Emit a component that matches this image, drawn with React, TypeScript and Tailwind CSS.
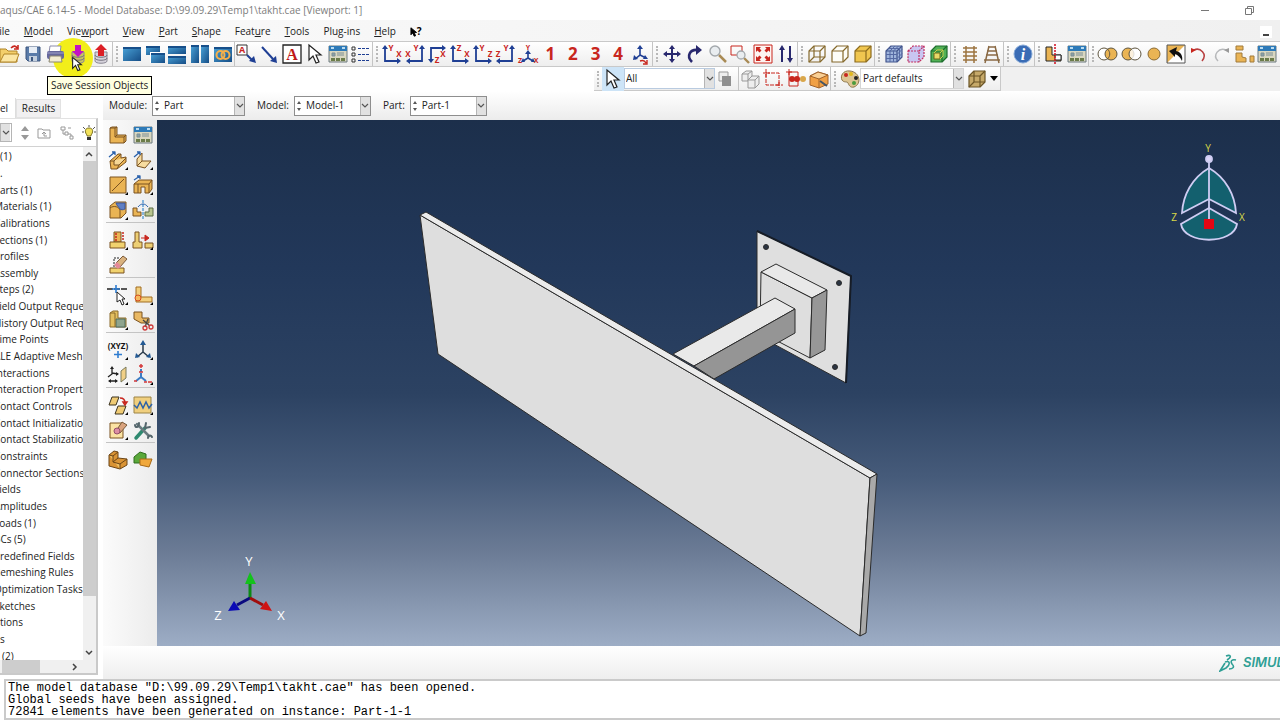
import type { ReactNode } from "react";

const NAVY = "#1f3f94";
const RED = "#c8261e";
const GOLD = "#eab454";
const BROWN = "#7a5220";

function Label({ x, y, children, fill = RED, size = 8 }: { x: number; y: number; children: ReactNode; fill?: string; size?: number }) {
  return (
    <text x={x} y={y} fontSize={size} fontWeight="bold" fill={fill} textAnchor="middle">
      {children}
    </text>
  );
}

function Axes({ corner, up, side }: { corner: "bl" | "br" | "tl"; up: string; side: string }) {
  if (corner === "tl") {
    return (
      <g>
        <path d="M5 17V5H16" fill="none" stroke={NAVY} strokeWidth="1.8" />
        <path d="M5 20l-3-4h6zM20 5l-4-3v6z" fill={NAVY} />
        <Label x={17} y={14}>{side}</Label>
        <Label x={11} y={20}>{up}</Label>
      </g>
    );
  }
  const left = corner === "bl";
  return (
    <g>
      <path d={left ? "M4 6V18H16" : "M18 6V18H6"} fill="none" stroke={NAVY} strokeWidth="1.8" />
      <path d={left ? "M4 2l3 4H1zM20 18l-4-3v6z" : "M18 2l3 4h-6zM2 18l4-3v6z"} fill={NAVY} />
      <Label x={left ? 10 : 12} y={8}>{up}</Label>
      <Label x={left ? 18 : 4} y={14}>{side}</Label>
    </g>
  );
}

function Cube({ fill, stroke, wire = false, dash }: { fill: string; stroke: string; wire?: boolean; dash?: string }) {
  return (
    <g stroke={stroke} strokeWidth="1.2" strokeLinejoin="round" strokeDasharray={dash}>
      <path d="M3 8l5-5h11v11l-5 5H3z" fill={fill} />
      <path d="M3 8h11v11M14 8l5-5" fill="none" />
      {wire && <path d="M8 3v11h11M8 14l-5 5" fill="none" />}
    </g>
  );
}

function Bluebox({ x, y, w, h }: { x: number; y: number; w: number; h: number }) {
  return (
    <g>
      <rect x={x} y={y} width={w} height={h} fill="url(#blue)" />
      <rect x={x} y={y} width={w} height={2} fill="#174f8a" />
    </g>
  );
}

function Disks({ color, arrow, fill }: { color: string; arrow: string; fill: string }) {
  return (
    <g>
      <path d="M5 9v9c0 3 12 3 12 0V9z" fill={fill} stroke="#8b8894" />
      <path d="M5 12c0 3 12 3 12 0M5 15c0 3 12 3 12 0" fill="none" stroke="#77747f" />
      <path d={arrow} fill={color} />
    </g>
  );
}

const cursorPath = "M5 2v15l4-4 3 7 3-1-3-7h5z";

const icons: Record<string, ReactNode> = {
  open: (
    <g stroke="#b08427">
      <path d="M1 19V6h6l2 2h9v11z" fill="#f3cf6b" />
      <path d="M1 19l4-8h15l-3 8z" fill="#fbe6a3" />
      <path d="M12 5c3-3 5-2 6 0M19 2v4h-4" fill="none" stroke={RED} strokeWidth="1.6" />
    </g>
  ),
  save: (
    <g>
      <path d="M4 4h14v14H6l-2-2z" fill="#5a7ba8" stroke="#3c577f" />
      <path d="M7 4h8v6H7z" fill="#e8eef5" />
      <path d="M7 13h8v5H7z" fill="#c3cfdd" />
      <path d="M9 14h2v4H9z" fill="#3c577f" />
    </g>
  ),
  print: (
    <g>
      <path d="M6 3h11l-1 7H5z" fill="#fff" stroke="#8c8cac" />
      <rect x="3" y="8" width="17" height="8" rx="2" fill="#66689c" />
      <path d="M3 10h17" stroke="#9fa1c8" />
      <path d="M6 13h11l1 6H5z" fill="#f2ecd2" stroke="#8a8670" />
    </g>
  ),
  sessionSave: <Disks color="#c313c3" fill="#c9c460" arrow="M8 2h6v6h3l-6 6-6-6h3z" />,
  sessionLoad: <Disks color="#dc1f26" fill="#d6d3dc" arrow="M8 13h6V7h3l-6-6-6 6h3z" />,
  single: <Bluebox x={2} y={4} w={18} h={14} />,
  cascade: (
    <g>
      <Bluebox x={2} y={3} w={14} h={9} />
      <path d="M6 9h15v11H6z" fill="#fff" />
      <Bluebox x={7} y={10} w={14} h={10} />
    </g>
  ),
  tileH: (
    <g>
      <Bluebox x={2} y={3} w={18} h={8} />
      <Bluebox x={2} y={13} w={18} h={8} />
    </g>
  ),
  tileV: (
    <g>
      <Bluebox x={2} y={2} w={8} h={18} />
      <Bluebox x={12} y={2} w={8} h={18} />
    </g>
  ),
  link: (
    <g>
      <Bluebox x={2} y={4} w={18} h={15} />
      <g fill="none" stroke="#f6b04a" strokeWidth="2">
        <circle cx="8.5" cy="12" r="4" />
        <circle cx="13.5" cy="12" r="4" />
      </g>
    </g>
  ),
  textArrow: (
    <g>
      <path d="M2 2h10v10H2z" fill="#fff" stroke="#333" />
      <Label x={7} y={10} size={9}>A</Label>
      <path d="M12 12l5 5" stroke={NAVY} strokeWidth="2" />
      <path d="M21 20l-2-7-5 5z" fill={NAVY} />
    </g>
  ),
  arrow: (
    <g>
      <path d="M4 4l11 12" stroke={NAVY} strokeWidth="2" />
      <path d="M19 20l-1-7-6 5z" fill={NAVY} />
    </g>
  ),
  text: (
    <g>
      <path d="M2 2h18v18H2z" fill="#fff" stroke="#222" strokeWidth="1.3" />
      <text x="11" y="17" fontSize="16" fontWeight="bold" fill="#c01818" textAnchor="middle" fontFamily="Liberation Serif, serif">A</text>
    </g>
  ),
  cursor: <path d={cursorPath} fill="#fff" stroke="#222" strokeWidth="1.2" />,
  manager: (
    <g>
      <path d="M2 3h18v16H2z" fill="#d9d7c0" stroke="#6d7a80" />
      <path d="M2 3h18v5H2z" fill="#2d7ab8" />
      <path d="M4 4h3v2H4zM15 4h3v2h-3z" fill="#b9dcf2" />
      <path d="M5 10h3v3H5zM10 10h7M10 12h7" fill="#8aa0a6" stroke="#7d8f95" />
      <path d="M4 15h4v3H4zM9 15h4v3H9zM14 15h4v3h-4z" fill="#6b7c4a" />
    </g>
  ),
  legend: (
    <g stroke="#333" fill="none">
      <path d="M2 4h3v3H2zM2 10h3v3H2zM2 16h3v3H2z" />
      <path d="M8 5.5h12M8 11.5h12M8 17.5h12" stroke={NAVY} strokeDasharray="3 1" />
    </g>
  ),
  xy: <Axes corner="bl" up="Y" side="X" />,
  yx: <Axes corner="br" up="Y" side="X" />,
  xz: <Axes corner="tl" up="Z" side="X" />,
  zx: <Axes corner="bl" up="Z" side="X" />,
  yz: <Axes corner="bl" up="Y" side="Z" />,
  zy: <Axes corner="br" up="Y" side="Z" />,
  iso: (
    <g>
      <path d="M11 10v5l-5 3M11 15l5 3" fill="none" stroke={NAVY} strokeWidth="1.6" />
      <path d="M11 7l3 4H8zM4 19l2-4 2 4zM18 19l-4 0 2-4z" fill={NAVY} />
      <Label x={11} y={7} size={7}>Y</Label>
      <Label x={3} y={20} size={7}>Z</Label>
      <Label x={19} y={20} size={7}>X</Label>
    </g>
  ),
  triad: (
    <g>
      <path d="M10 5v7l-5 4M10 12l6 3" fill="none" stroke={NAVY} strokeWidth="1.6" />
      <path d="M10 2l3 4H7zM3 17l1-5 4 4zM18 16l-5 0 2-4z" fill={NAVY} />
      <path d="M10 18c3-1 5 0 6 2M17 17v4h-4" fill="none" stroke={RED} strokeWidth="1.4" />
    </g>
  ),
  pan: (
    <g fill="#28286e">
      <path d="M10 5h2v12h-2zM5 10h12v2H5z" />
      <path d="M11 2l3 4H8zM11 20l3-4H8zM2 11l4-3v6zM20 11l-4-3v6z" />
    </g>
  ),
  rotate: (
    <g>
      <path d="M8 19C2 13 6 6 14 7" fill="none" stroke="#28286e" strokeWidth="2.6" />
      <path d="M12 2l6 5-6 5z" fill="#28286e" />
    </g>
  ),
  zoom: (
    <g>
      <path d="M12 12l7 7" stroke="#a98b55" strokeWidth="2.5" />
      <circle cx="8" cy="8" r="5" fill="#e9edf0" stroke="#a3a8ac" strokeWidth="1.4" />
    </g>
  ),
  zoomBox: (
    <g>
      <path d="M2 3h11v9H2z" fill="none" stroke={RED} />
      <path d="M15 15l5 5" stroke="#a98b55" strokeWidth="2.4" />
      <circle cx="12" cy="12" r="4" fill="#e9edf0" stroke="#a3a8ac" strokeWidth="1.3" />
    </g>
  ),
  fit: (
    <g>
      <path d="M2 2h18v18H2z" fill="#fdf3f0" stroke={RED} />
      <path d="M4 4h5L7.5 5.5l2 2-2 2-2-2L4 9zM18 4h-5l1.500 1.500-2 2 2 2 2-2L18 9zM4 18h5l-1.500-1.500 2-2-2-2-2 2L4 13zM18 18h-5l1.500-1.500-2-2 2-2 2 2L18 13z" fill={RED} />
    </g>
  ),
  upDown: (
    <g fill="#28286e">
      <path d="M6 6h2v13H6zM14 3h2v13h-2z" />
      <path d="M7 2l3 5H4zM15 20l3-5h-6z" />
    </g>
  ),
  wire: <Cube fill="none" stroke="#85692c" wire />,
  hidden: <Cube fill="#fdfdf8" stroke="#85692c" />,
  shaded: <Cube fill="#f0c64f" stroke="#8d6c1e" />,
  mesh: (
    <g>
      <Cube fill="#9fb4dc" stroke="#41548c" />
      <path d="M7 8v11M10.500 8v11M3 11.500h11l5-5M3 15.500h11l5-5M5.500 5.500h11V17M7 8l5-5M10.500 8l5-5" fill="none" stroke="#5569a3" />
    </g>
  ),
  seeds: <Cube fill="#c9c6f1" stroke="#c22d60" dash="2 1" />,
  geometry: (
    <g>
      <Cube fill="#51b055" stroke="#1c6c2c" />
      <path d="M6 10h6v6H6z" fill="#e8d868" stroke="#6f6718" />
      <path d="M6 10l3-3h6v6l-3 3M12 10l3-3" fill="none" stroke="#c9cf4c" />
    </g>
  ),
  ladder: <path d="M7 3v17M15 3v17M4 5h14M4 9h14M4 13h14M4 17h14" fill="none" stroke="#9c7440" strokeWidth="1.5" />,
  perspective: <path d="M8 3L4 20M14 3l4 17M7 4h8M6 8h10M5 12h12M3 17h16" fill="none" stroke="#8a6a45" strokeWidth="1.5" />,
  info: (
    <g>
      <circle cx="11" cy="11" r="9" fill="#3a6cb5" stroke="#86a9d8" />
      <text x="11" y="17" fontSize="16" fontWeight="bold" fontStyle="italic" fill="#fff" textAnchor="middle" fontFamily="Liberation Serif, serif">i</text>
    </g>
  ),
  section: (
    <g>
      <path d="M3 4h6v8h9v6H3z" fill={GOLD} stroke="#222" />
      <path d="M12 12h6v5h-6z" fill="#fff" stroke="#222" />
      <path d="M12 1v20" stroke="#d31b2c" strokeWidth="1.6" strokeDasharray="2 1" />
    </g>
  ),
  unionRight: (
    <g stroke="#5e5540">
      <circle cx="7" cy="11" r="6" fill="#fff" />
      <circle cx="14" cy="11" r="6" fill={GOLD} />
      <path d="M10.500 6c3 3 3 7 0 10" fill="none" />
    </g>
  ),
  unionLeft: (
    <g stroke="#5e5540">
      <circle cx="8" cy="11" r="6" fill={GOLD} />
      <circle cx="15" cy="11" r="6" fill="#fffc" />
    </g>
  ),
  disk: <circle cx="11" cy="11" r="6" fill={GOLD} stroke="#8b6b34" />,
  invert: (
    <g>
      <path d="M2 2h18v18H2z" fill="#fff" />
      <path d="M2 20V2h18z" fill={GOLD} />
      <path d="M2 2h18v18H2z" fill="none" stroke="#555" />
      <path d="M17 18c1-5-1-9-6-10l1-4-8 4 6 6v-3c3 1 5 3 7 7z" fill="#111" />
    </g>
  ),
  undo: (
    <g>
      <path d="M6 7c6-3 14 4 8 11" fill="none" stroke="#b84040" strokeWidth="1.5" />
      <path d="M3 5v5l5-3z" fill={RED} />
    </g>
  ),
  redo: (
    <g>
      <path d="M16 7C9 4 2 12 8 18" fill="none" stroke="#b7b9bb" strokeWidth="1.5" />
      <path d="M19 5v5l-5-3z" fill="#999" />
    </g>
  ),
  replace: (
    <g fill={GOLD} stroke="#a07a3c">
      <path d="M3 3h7v4H3zM3 10h6v4l4 1v4H3zM17 13h4v6h-4z" />
    </g>
  ),
  overlap: (
    <g>
      <path d="M3 4h9v9H3z" fill="#eee" stroke="#999" />
      <path d="M6 8h9v10H6z" fill="#8f8f8f" />
    </g>
  ),
  greyCubes: (
    <g fill="#eee" stroke="#999">
      <path d="M3 6l4-3h6v7l-4 3H3zM3 6h6v7M9 6l4-3" />
      <path d="M9 12l4-4h7v8l-4 4H9zM9 12h7v8M16 12l4-4" />
    </g>
  ),
  selectBox: <path d="M4 5h13v12H4zM4 1v8M1 5h7M17 14v6M14 17h7" fill="none" stroke={RED} strokeDasharray="4 1" />,
  selectSet: (
    <g>
      <path d="M4 4h9v14H4zM1 4h6M4 1v6" fill="none" stroke={RED} />
      <circle cx="7" cy="11" r="3" fill="#c8261e" />
      <circle cx="12" cy="11" r="3" fill="#c8261e" />
      <circle cx="18" cy="11" r="3" fill="#d9a64a" />
    </g>
  ),
  orangeBox: (
    <g stroke="#a1622a">
      <path d="M2 8l8-4 10 3v9l-9 4-9-3z" fill="#f0a045" />
      <path d="M2 8l9 3 9-4-10-3z" fill="#f9cf95" />
      <path d="M11 11v9" />
      <path d="M12 13l7 5" stroke="#456" strokeWidth="2" />
    </g>
  ),
  palette: (
    <g>
      <path d="M11 3C4 2 1 8 3 12c2 3 5 1 6 3s2 5 6 4c8-3 6-15-4-16z" fill="#ddc592" stroke="#8a7448" />
      <circle cx="7" cy="7" r="2" fill="#c8261e" />
      <circle cx="12" cy="6" r="2" fill="#e2b91d" />
      <circle cx="17" cy="10" r="2" fill="#222" />
      <circle cx="15" cy="15" r="2" fill="#4b9b3d" />
    </g>
  ),
  tanCube: <Cube fill="#c6a969" stroke="#6b5526" wire />,
  createPart: (
    <g stroke={BROWN} strokeLinejoin="round">
      <path d="M3 4l2-1h5v8l9 0v6l-2 2H3z" fill={GOLD} />
      <path d="M3 4h5v9h9v6M8 4l2-1M8 13l2-2M17 13l2-2" fill="none" />
    </g>
  ),
  extrude: (
    <g stroke={BROWN} strokeLinejoin="round">
      <path d="M3 12l8-7h3v4l5-1v5l-9 7H4z" fill={GOLD} />
      <path d="M3 12h4v4h5l7-7M7 12l7-7M12 16l-2 4" fill="#f6d795" />
      <path d="M2 8l6-5M5 3h3v3" fill="none" stroke="#2b62ac" strokeWidth="1.3" />
    </g>
  ),
  shell: (
    <g stroke={BROWN} strokeLinejoin="round">
      <path d="M5 10l5-6v8l9 0-6 7-8-2z" fill="#f7dca0" />
      <path d="M5 17l5-5" />
      <path d="M2 8l6-5M5 3h3v3" fill="none" stroke="#2b62ac" strokeWidth="1.3" />
    </g>
  ),
  wireLine: (
    <g stroke={BROWN}>
      <path d="M3 3h16v16H3z" fill={GOLD} />
      <path d="M5 17L17 5" />
    </g>
  ),
  cut: (
    <g stroke={BROWN} strokeLinejoin="round">
      <path d="M2 10l5-4h13v9l-3 4h-4v-6H9v6H2z" fill={GOLD} />
      <path d="M2 10h15l3-4M17 10v9M6 10v9" fill="none" />
      <path d="M2 6l6-4M5 2h3v3" fill="none" stroke="#2b62ac" strokeWidth="1.3" />
    </g>
  ),
  round: (
    <g stroke={BROWN} strokeLinejoin="round">
      <path d="M3 7l5-4h11v11l-5 5H3z" fill={GOLD} />
      <path d="M3 9c4-3 9-1 10 2v8" fill="none" />
      <path d="M9 4h9v6c-2 1-4 1-5 0-2-3-3-3-4-6z" fill="#5f7fc4" stroke="#3c569a" />
    </g>
  ),
  mirror: (
    <g>
      <path d="M1 9h4v4h4v4H1z" fill={GOLD} stroke={BROWN} />
      <path d="M21 9h-4v4h-4v4h8z" fill="#b9c58e" stroke="#5c6d47" />
      <path d="M11 1v20" stroke="#4b94d2" strokeWidth="1.3" strokeDasharray="3 1" />
      <path d="M6 8c3-4 7-4 10 0" fill="none" stroke="#2b62ac" />
    </g>
  ),
  editFeature: (
    <g stroke={BROWN}>
      <path d="M7 3h7v10H7z" fill={GOLD} />
      <path d="M3 13h15v6H3z" fill="#f1d26e" />
      <path d="M16 3v9M9 4v8" stroke={RED} strokeDasharray="2 1" strokeWidth="1.5" />
    </g>
  ),
  moveFeature: (
    <g stroke={BROWN}>
      <path d="M3 3h4v10h3v6H1v-6h2z" fill="#edcf74" />
      <path d="M13 14h8v5h-8z" fill="#edcf74" />
      <path d="M9 9h6M13 6l4 3-4 3z" stroke={RED} fill={RED} />
    </g>
  ),
  deleteFeature: (
    <g>
      <path d="M3 14h14v5H3z" fill="#f1d26e" stroke={BROWN} />
      <path d="M7 13V4h6" fill="none" stroke="#222" strokeDasharray="2 1" />
      <path d="M9 9l4 4 7-8-4-3z" fill="#d9b27e" stroke="#7a5a3a" />
      <path d="M7 11l3-3 4 4-3 3z" fill="#e58a98" />
    </g>
  ),
  partition: (
    <g>
      <path d="M0 5h21" stroke="#222" strokeWidth="1.6" strokeDasharray="6 1" />
      <path d="M9 1v8M5 5h8" stroke="#2f7dd1" strokeWidth="1.6" />
      <path d="M10 8v10l3-2 2 5 2-1-2-5h3z" fill="#fff" stroke="#222" />
    </g>
  ),
  partitionFace: (
    <g stroke="#a16c21">
      <path d="M4 3h5v10h11v5H4z" fill="#f2cf7d" />
      <circle cx="6" cy="14" r="3" fill="#f6b95c" stroke="#d34b1f" />
    </g>
  ),
  partitionCell: (
    <g stroke="#8a6a2c">
      <path d="M3 4l3-2h5v7h8v9H3z" fill="#e3bf5f" />
      <path d="M9 10h9v8H9z" fill="#8fa48d" stroke="#4c6a5e" />
      <path d="M3 4h5v14" fill="none" />
    </g>
  ),
  repair: (
    <g>
      <path d="M2 3h8v6h7v5H9L2 10z" fill="#e9b863" stroke={BROWN} />
      <path d="M11 11l7 6M16 10l-3 8" stroke="#444" strokeWidth="1.3" />
      <g fill="none" stroke="#cf3a3a" strokeWidth="1.3">
        <circle cx="19" cy="18" r="2" />
        <circle cx="13" cy="19" r="2" />
      </g>
    </g>
  ),
  point: (
    <g>
      <Label x={11} y={10} fill="#111" size={8}>(XYZ)</Label>
      <path d="M11 12v7M7 15.500h8" stroke="#2f7dd1" strokeWidth="1.6" />
    </g>
  ),
  datumAxis: (
    <g>
      <path d="M11 4v9l-6 5M11 13l6 5" fill="none" stroke="#2a3a4a" strokeWidth="1.5" />
      <path d="M11 1l3 5H8zM3 19l1-5 4 4zM19 19l-5-1 4-4z" fill="#245a94" />
    </g>
  ),
  datumPlane: (
    <g>
      <path d="M5 4v6l-4 3M5 9l6 1M2 17h8" fill="none" stroke="#222" strokeWidth="1.3" />
      <path d="M5 2l2 3H3zM12 10l-3-2v4zM1 17l3-2v4zM11 17l-3-2v4z" fill="#222" />
      <path d="M14 7l5-4v11l-5 4z" fill="#f0cf86" stroke="#7a7a5c" />
    </g>
  ),
  datumCsys: (
    <g>
      <path d="M9 9v4l-5 4M9 13l5 4" fill="none" stroke="#3b7cc4" strokeWidth="2" />
      <path d="M9 5v3" stroke="#3b7cc4" strokeWidth="2" />
      <path d="M7 2h4M9 0v4M7 8h4M2 17h3M12 18h3M16 18h4" stroke="#d3383a" strokeWidth="1.5" />
    </g>
  ),
  sketchCopy: (
    <g fill="#f0cb74" stroke="#3c3420">
      <path d="M5 3h7l-3 8H2zM11 12h8l-3 8H8z" />
      <path d="M13 4c3 0 5 2 5 5M18 11l-2-3h4z" fill="none" stroke={RED} strokeWidth="1.5" />
    </g>
  ),
  wave: (
    <g>
      <path d="M2 3h17v16H2z" fill="#f0cf7e" stroke="#9c8446" />
      <path d="M2 11l3 3 3-6 3 6 3-6 3 6 3-4" fill="none" stroke="#2f64a8" strokeWidth="1.5" />
    </g>
  ),
  eraseSketch: (
    <g>
      <path d="M3 4h13v15H3z" fill="#fbe3a3" stroke={BROWN} />
      <path d="M9 12l6-9 5 3-7 8z" fill="#d9a37e" stroke="#7a5a3a" />
      <circle cx="10" cy="12" r="3" fill="#dd8ea4" stroke="#94506a" />
    </g>
  ),
  tools: (
    <g fill="none" strokeLinecap="round">
      <path d="M4 19l9-10" stroke="#2f8a70" strokeWidth="3.5" />
      <path d="M5 5l12 12" stroke="#6a7b80" strokeWidth="2.5" />
      <path d="M3 6c0 3 4 3 4-2M16 19c0-3 3-3 4-1M14 4l-1 5 5-1" stroke="#55666c" strokeWidth="2" />
    </g>
  ),
  partBlock: (
    <g stroke="#6b4516" strokeLinejoin="round">
      <path d="M2 6l5-4 4 1v6l9 1v6l-7 4-11-3z" fill="#d99334" />
      <path d="M2 6l4 1v6l7 2v5M6 7l5-4M6 13l5-4M13 15l7-5" fill="#f0c063" />
    </g>
  ),
  greenBlock: (
    <g strokeLinejoin="round">
      <path d="M2 8l6-5 6 2v5l-5 4H2z" fill="#5aa83a" stroke="#2f6d1f" />
      <path d="M8 10h12l-3 8-9-2z" fill="#f0a83c" stroke="#a86a18" />
    </g>
  ),
};

function Tool({ name, label, corner = false }: { name: string; label?: string; corner?: boolean }) {
  return (
    <button type="button" aria-label={label ?? name} className="flex h-6 min-w-0 flex-1 items-center justify-center">
      <svg viewBox="0 0 22 22" className="h-[22px] w-[22px] shrink-0">
        {icons[name]}
        {corner && <path d="M21 18v3h-3z" fill="#000" />}
      </svg>
    </button>
  );
}

function Grip() {
  return <span className="mx-[3px] h-4 w-0.5 shrink-0 self-center border-l-2 border-dotted border-[#b8b8b8]" />;
}

function Group({ width, grip = true, names, children }: { width: string; grip?: boolean; names: string[]; children?: ReactNode }) {
  return (
    <div className={`flex shrink-0 items-center border-l border-[#c4c4c4] ${width}`}>
      {grip && <Grip />}
      {names.map((name) => (
        <Tool key={name} name={name} />
      ))}
      {children}
    </div>
  );
}

function Chevron() {
  return (
    <span className="pointer-events-none flex w-[10px] shrink-0 items-center justify-center border-l border-[#b5b5b5] bg-[#e1e1e1]">
      <svg viewBox="0 0 8 6" className="h-[6px] w-2">
        <path d="M1 1l3 3 3-3" fill="none" stroke="#555" strokeWidth="1.2" />
      </svg>
    </span>
  );
}

function Spinner() {
  return (
    <svg viewBox="0 0 8 14" className="h-[14px] w-2 shrink-0 self-center">
      <path d="M4 2l2 3H2zM4 12l2-3H2z" fill="#555" />
    </svg>
  );
}

function Combo({ id, label, value, width }: { id: string; label: string; value: string; width: string }) {
  return (
    <div className="flex items-center gap-[5px]">
      <label htmlFor={id}>{label}</label>
      <div className={`flex h-5 border border-[#8e8e8e] bg-white ${width}`}>
        <Spinner />
        <select id={id} className="min-w-0 flex-1 appearance-none bg-transparent pl-[3px] outline-none">
          <option>{value}</option>
        </select>
        <Chevron />
      </div>
    </div>
  );
}

const menus: [string, string, string][] = [
  ["", "", "File"],
  ["", "M", "odel"],
  ["Vie", "w", "port"],
  ["", "V", "iew"],
  ["", "P", "art"],
  ["", "S", "hape"],
  ["Feat", "u", "re"],
  ["", "T", "ools"],
  ["Plu", "g", "-ins"],
  ["", "H", "elp"],
];

const treeItems = [
  "Parts (1)",
  "Materials (1)",
  "Calibrations",
  "Sections (1)",
  "Profiles",
  "Assembly",
  "Steps (2)",
  "Field Output Requests",
  "History Output Requests",
  "Time Points",
  "ALE Adaptive Mesh",
  "Interactions",
  "Interaction Properties",
  "Contact Controls",
  "Contact Initializations",
  "Contact Stabilizations",
  "Constraints",
  "Connector Sections",
  "Fields",
  "Amplitudes",
  "Loads (1)",
  "BCs (5)",
  "Predefined Fields",
  "Remeshing Rules",
  "Optimization Tasks",
  "Sketches",
];

const paletteGroups = [
  ["createPart", "manager", "extrude", "shell", "wireLine", "cut", "round", "mirror"],
  ["editFeature", "moveFeature", "deleteFeature"],
  ["partition", "partitionFace", "partitionCell", "repair"],
  ["point", "datumAxis", "datumPlane", "datumCsys"],
  ["sketchCopy", "wave", "eraseSketch", "tools"],
  ["partBlock", "greenBlock"],
];

const noCorner = ["createPart", "manager", "mirror", "deleteFeature", "repair", "tools", "partBlock", "greenBlock"];

function ModelTree() {
  return (
    <aside className="flex w-[98px] shrink-0 flex-col pt-1.5 pb-1">
      <div className="flex h-[21px] items-end">
        <button type="button" className="h-5 w-4 border-r border-[#ddd] bg-white text-left">el</button>
        <button type="button" className="h-[19px] w-[45px] border border-[#e2e2e2] bg-[#f1f0f1]">Results</button>
      </div>
      <div className="flex min-h-0 flex-1 flex-col border-t border-r-2 border-b-2 border-t-[#e2e2e2] border-[#c9c9c9] bg-white">
        <div className="flex h-7 shrink-0 items-center justify-between border-b border-[#d2d2d2]">
          <div className="flex h-[19px] w-3 border border-l-0 border-[#b5b5b5]">
            <Chevron />
          </div>
          <svg viewBox="0 0 8 14" className="h-[14px] w-2">
            <path d="M4 0l4 5H0zM4 14l4-5H0z" fill="#999" />
          </svg>
          <svg viewBox="0 0 14 12" className="h-3 w-[14px]" fill="none" stroke="#999">
            <path d="M1 11V2h4l1 1h7v8zM7 9V5M5 7l2-2 2 2M7 9h3" />
          </svg>
          <svg viewBox="0 0 14 14" className="h-[14px] w-[14px]" fill="none" stroke="#999">
            <path d="M1 1h4v3H1zM5 6h3v3H5zM10 10h3v3h-3zM8 2h3M3 4v4h2M8 8h3v2" />
          </svg>
          <svg viewBox="0 0 14 16" className="h-4 w-[14px]">
            <path d="M7 0v2M1 2l2 2M13 2l-2 2M0 7h2M12 7h2" stroke="#555" />
            <path d="M7 3c-5 0-4 5-2 7v1h4v-1c2-2 3-7-2-7z" fill="#f3e25b" stroke="#7e7320" />
            <path d="M5 12h4v3H5z" fill="#333" />
          </svg>
        </div>
        <div className="flex min-h-0 flex-1">
          <ul className="-mb-1 grid min-w-0 flex-1 auto-rows-fr items-center overflow-hidden pt-px leading-4 whitespace-nowrap">
            <li>(1)</li>
            <li>.</li>
            {treeItems.map((item) => (
              <li key={item} className="-ml-1.5">{item}</li>
            ))}
            <li>tions</li>
            <li>s</li>
            <li className="pl-0.5">(2)</li>
          </ul>
          <div className="flex w-[13px] shrink-0 flex-col bg-[#f0f0f0]">
            <svg viewBox="0 0 12 14" className="h-[14px] w-3">
              <path d="M3 9l3-3 3 3" fill="none" stroke="#444" strokeWidth="1.5" />
            </svg>
            <div className="flex-[87] bg-[#cdcdcd]" />
            <div className="flex-[10]" />
            <svg viewBox="0 0 12 14" className="h-[14px] w-3">
              <path d="M3 5l3 3 3-3" fill="none" stroke="#444" strokeWidth="1.5" />
            </svg>
          </div>
        </div>
        <div className="flex h-[13px] shrink-0 items-center bg-[#f0f0f0] pl-0.5">
          <div className="h-full w-[38px] bg-[#cdcdcd]" />
          <svg viewBox="0 0 12 12" className="ml-7 h-3 w-3">
            <path d="M5 3l3 3-3 3" fill="none" stroke="#444" strokeWidth="1.5" />
          </svg>
        </div>
      </div>
    </aside>
  );
}

function Viewport() {
  return (
    <div className="min-w-0 flex-1 bg-[linear-gradient(#1c2f4b_0%,#22385a_28%,#2c4262_52%,#465b7a_68%,#6b7b95_82%,#9dadc5_100%)]">
      <svg viewBox="157 120 1123 526" className="h-full w-full" role="img" aria-label="Part-1">
        <g stroke="#2b2b2b" strokeLinejoin="round">
          <path d="M757 231l94 45-5 107-89-48z" fill="#dfdfdf" />
          <path d="M757 231l94 45-5 107" fill="none" stroke="#161c26" strokeWidth="2" />
          <g fill="#2a3442">
            <circle cx="766" cy="247" r="2.5" />
            <circle cx="839" cy="283" r="2.5" />
            <circle cx="835" cy="367" r="2.5" />
          </g>
          <path d="M761 272l51 26-2 60-50-26z" fill="#dedede" />
          <path d="M761 272l15-8 51 26-15 8z" fill="#e9e9e9" />
          <path d="M812 298l15-8-2 60-15 8z" fill="#979797" />
          <path d="M775 298l20 11-101 57-21-12z" fill="#e9e9e9" />
          <path d="M795 309v24l-81 46-20-13z" fill="#959595" />
          <path d="M420 215l450 263-10 158-422-282z" fill="#dedede" />
          <path d="M420 215l6-3 451 262-7 4z" fill="#ececec" />
          <path d="M870 478l7-4-11 159-6 3z" fill="#a9a9a9" />
        </g>
        <g strokeWidth="3">
          <path d="M250 598v-15" stroke="#0c8a14" />
          <path d="M250 572l6 12h-11z" fill="#13c31b" />
          <path d="M250 598l-13 7" stroke="#0a0a80" />
          <path d="M228 611l6-10 6 9z" fill="#0b0bb5" />
          <path d="M250 598l13 7" stroke="#a10d0d" />
          <path d="M272 611l-6-10-6 8z" fill="#cf1414" />
        </g>
        <g fill="#fff" fontSize="13" textAnchor="middle">
          <text x="249" y="566">Y</text>
          <text x="218" y="620">Z</text>
          <text x="281" y="620">X</text>
        </g>
        <g fill="#13606e" stroke="#cfcdf3" strokeWidth="1.8">
          <path d="M1209 168c-17 10-26 27-27 45l27-14 27 14c-1-18-10-35-27-45z" />
          <path d="M1209 208l-28 16c3 21 53 21 56 0z" />
          <path d="M1209 160v62" />
          <circle cx="1209" cy="159" r="3" fill="#dcd6f7" />
        </g>
        <path d="M1204 219h10v10h-10z" fill="#e30613" />
        <g fill="#d8d848" fontSize="10" textAnchor="middle">
          <text x="1208" y="152">Y</text>
          <text x="1174" y="221">Z</text>
          <text x="1242" y="221">X</text>
        </g>
      </svg>
    </div>
  );
}

export default function App() {
  return (
    <div className="relative flex h-screen flex-col overflow-hidden bg-white font-['Open_Sans','Noto_Sans',sans-serif] text-[10px] text-[#222]">
      <svg className="absolute h-0 w-0">
        <linearGradient id="blue" x1="0" y1="0" x2="1" y2="1">
          <stop offset="0" stopColor="#4aa3d8" />
          <stop offset="1" stopColor="#164d86" />
        </linearGradient>
      </svg>

      <header className="flex h-5 shrink-0 items-center text-[#7c7c7c]">
        <h1 className="flex-1">aqus/CAE 6.14-5 - Model Database: D:\99.09.29\Temp1\takht.cae [Viewport: 1]</h1>
        <button type="button" aria-label="Minimize" className="mr-9 h-px w-2 bg-[#777]" />
        <button type="button" aria-label="Restore" className="mr-[26px]">
          <svg viewBox="0 0 9 9" className="h-[9px] w-[9px]" fill="none" stroke="#777">
            <path d="M.5 2.500h6v6h-6zM2.500 2.500v-2h6v6h-2" />
          </svg>
        </button>
      </header>

      <nav className="flex h-[21px] shrink-0 items-center gap-3.5 bg-gradient-to-r from-[#fafafa] to-[#f0f0f0] pt-0.5">
        {menus.map(([before, key, after]) => (
          <button key={after} type="button" className="first:-ml-1.5">
            {before}
            <span className="underline">{key}</span>
            {after}
          </button>
        ))}
        <button type="button" aria-label="Context help" className="flex items-center font-bold text-black">
          <svg viewBox="3 1 15 20" className="h-[10px] w-[7px]">
            <path d={cursorPath} fill="#000" stroke="#000" strokeWidth="2" />
          </svg>
          ?
        </button>
        <button type="button" aria-label="Minimize viewport" className="mr-2 ml-auto flex h-3 w-3 items-end justify-center bg-white pb-0.5">
          <span className="h-0.5 w-1.5 bg-[#444]" />
        </button>
      </nav>

      <div className="relative isolate flex h-[26px] shrink-0 border-y border-[#c9c9c9] bg-gradient-to-b from-white to-[#eee]">
        <div className="pointer-events-none absolute -top-1 left-[53px] -z-10 h-10 w-10 rounded-full bg-[#f2ee1a]" />
        <Group width="-ml-0.5 w-[114px]" grip={false} names={["open", "save", "print", "sessionSave", "sessionLoad"]} />
        <Group width="w-[122px]" names={["single", "cascade", "tileH", "tileV", "link"]} />
        <Group width="w-[138px]" grip={false} names={["textArrow", "arrow", "text", "cursor", "manager", "legend"]} />
        <Group width="w-[280px]" names={["xy", "yx", "xz", "zx", "yz", "zy", "iso"]}>
          {["1", "2", "3", "4"].map((n) => (
            <button key={n} type="button" className="min-w-0 flex-1 text-[17px] leading-6 font-bold text-[#c8261e]">{n}</button>
          ))}
          <Tool name="triad" />
        </Group>
        <Group width="w-[145px]" names={["pan", "rotate", "zoom", "zoomBox", "fit", "upDown"]} />
        <Group width="w-[77px]" names={["wire", "hidden", "shaded"]} />
        <Group width="w-[76px]" names={["mesh", "seeds", "geometry"]} />
        <Group width="w-[53px]" names={["ladder", "perspective"]} />
        <Group width="w-[31px]" names={["info"]} />
        <Group width="w-[54px]" names={["section", "manager"]} />
        <Group width="w-[190px]" names={["unionRight", "unionLeft", "disk", "invert", "undo", "redo", "replace", "manager"]} />
      </div>

      <div className="flex h-6 shrink-0 justify-end">
        <div className="flex w-[407px] items-center border-r border-b border-[#c9c9c9] bg-gradient-to-b from-white to-[#eee]">
          <Grip />
          <div className="flex w-[22px] bg-[#cde4f7]">
            <Tool name="cursor" />
          </div>
          <div className="flex h-[21px] w-[91px] border border-[#b9cbe0] bg-white">
            <select aria-label="Selection filter" className="min-w-0 flex-1 appearance-none pl-px outline-none">
              <option>All</option>
            </select>
            <Chevron />
          </div>
          <div className="flex w-[23px]">
            <Tool name="overlap" />
          </div>
          <Group width="w-[92px]" grip={false} names={["greyCubes", "selectBox", "selectSet", "orangeBox"]} />
          <Group width="w-[30px]" names={["palette"]} />
          <div className="flex h-[21px] w-[104px] border border-[#d5d5d5] bg-white">
            <select aria-label="Color coding" className="min-w-0 flex-1 appearance-none pl-0.5 outline-none">
              <option>Part defaults</option>
            </select>
            <Chevron />
          </div>
          <Tool name="tanCube" />
          <svg viewBox="0 0 8 5" className="mr-0.5 h-[5px] w-2">
            <path d="M0 0h8L4 5z" fill="#000" />
          </svg>
        </div>
        <div className="w-[279px] bg-[#f0f0f0]" />
      </div>

      <main className="flex min-h-0 flex-1">
        <ModelTree />
        <section className="ml-[5px] flex min-w-0 flex-1 flex-col">
          <div className="flex h-[29px] shrink-0 items-center gap-3 bg-gradient-to-b from-white to-[#ececec] pl-1.5">
            <Combo id="module" label="Module:" value="Part" width="w-[93px]" />
            <Combo id="model" label="Model:" value="Model-1" width="w-[77px]" />
            <Combo id="part" label="Part:" value="Part-1" width="w-[77px]" />
          </div>
          <div className="flex min-h-0 flex-1">
            <div className="w-[54px] shrink-0 bg-gradient-to-r from-[#fbfbfb] to-[#ececec] pt-0.5 pr-0.5 pl-[3px]">
              {paletteGroups.map((group) => (
                <div key={group[0]} className="grid auto-rows-[25px] grid-cols-2 items-center border-t border-[#c4c4c4] pt-1 first:border-t-0 first:pt-0">
                  {group.map((name) => (
                    <Tool key={name} name={name} corner={!noCorner.includes(name)} />
                  ))}
                </div>
              ))}
            </div>
            <Viewport />
          </div>
          <div className="flex h-[33px] shrink-0 justify-end overflow-hidden bg-gradient-to-b from-white to-[#eee]">
            <div className="flex w-[61px] items-center gap-1.5 whitespace-nowrap text-[#2f9f95]">
              <svg viewBox="0 0 18 18" className="h-[18px] w-[18px] shrink-0" fill="none" stroke="#2f9f95" strokeWidth="1.6">
                <path d="M7 2c5-2 6 1 1 4M6 8c6-2 5 3 1 6-2 1-4 2-6 3l5-8M17 6c-4-1-6 1-4 4 3 3 1 5-3 5" />
              </svg>
              <span className="font-[Inter] text-[13px] font-semibold italic">SIMULIA</span>
            </div>
          </div>
        </section>
      </main>

      <footer className="ml-1 shrink-0 border-2 border-r-0 border-[#cacaca] bg-white px-0.5 pt-px font-['Liberation_Mono',monospace] text-[12px] leading-3 text-black">
        <p>The model database "D:\99.09.29\Temp1\takht.cae" has been opened.</p>
        <p>Global seeds have been assigned.</p>
        <p>72841 elements have been generated on instance: Part-1-1</p>
      </footer>

      <svg viewBox="0 0 22 22" className="pointer-events-none absolute top-[56px] left-[69px] h-4 w-4">
        <path d={cursorPath} fill="#fff" stroke="#222" strokeWidth="1.5" />
      </svg>
      <div role="tooltip" className="absolute top-[76px] left-[47px] border border-black bg-[#ffffe1] px-[3px] leading-[17px] text-[#222]">
        Save Session Objects
      </div>
    </div>
  );
}
